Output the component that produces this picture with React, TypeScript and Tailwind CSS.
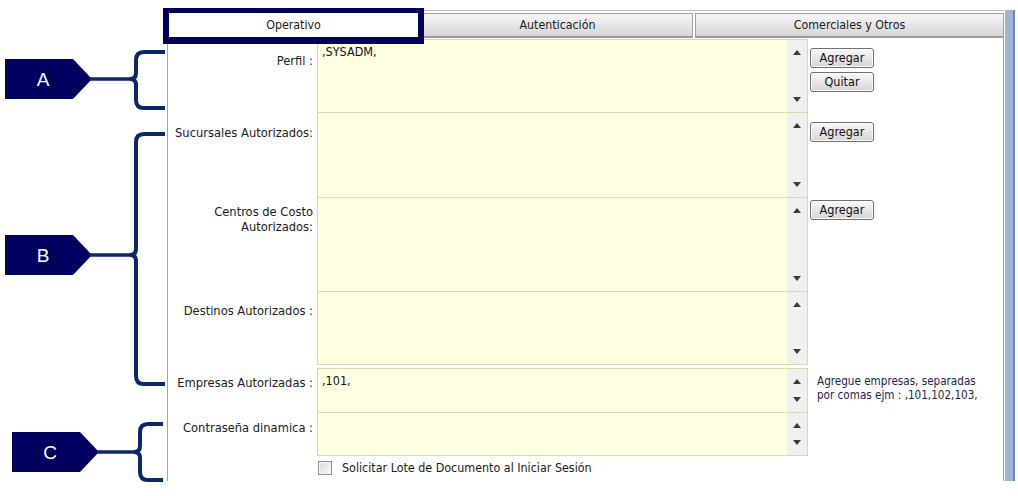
import type { ReactNode } from "react";

type Row = {
  label: string[];
  h: string;
  lp: string;
  sp?: string;
  value?: string;
  last?: boolean;
  side?: ReactNode;
};

// callout shapes for the left margin: tag + curly brace
const tag = (x0: number, xr: number, xt: number, ya: number, yb: number) =>
  `M${x0} ${ya} H${xr} L${xt} ${(ya + yb) / 2} L${xr} ${yb} H${x0} Z`;

const brace = (x: number, y0: number, ym: number, y1: number, xe: number) =>
  `M${xe} ${y0} H${x + 8} Q${x} ${y0} ${x} ${y0 + 8} V${ym - 6} Q${x} ${ym} ${x - 6} ${ym} Q${x} ${ym} ${x} ${ym + 6} V${y1 - 8} Q${x} ${y1} ${x + 8} ${y1} H${xe}`;

const callouts = [
  { letter: "A", x0: 5, xr: 73, xt: 92, ya: 59, yb: 99, bx: 136, y0: 52, y1: 108, xe: 165 },
  { letter: "B", x0: 5, xr: 73, xt: 92, ya: 235, yb: 275, bx: 136, y0: 134, y1: 384, xe: 165 },
  { letter: "C", x0: 12, xr: 80, xt: 99, ya: 432, yb: 472, bx: 140, y0: 424, y1: 480, xe: 163 },
];

function Callouts() {
  return (
    <svg width="167" height="496" className="flex-none">
      {callouts.map((c) => {
        const ym = (c.ya + c.yb) / 2;
        return (
          <g key={c.letter}>
            <path d={tag(c.x0, c.xr, c.xt, c.ya, c.yb)} fill="#00005f" />
            <path d={`M${c.xt - 2} ${ym} H${c.bx - 5}`} stroke="#0b2767" strokeWidth="3.5" fill="none" />
            <path d={brace(c.bx, c.y0, ym, c.y1, c.xe)} stroke="#0b2767" strokeWidth="4" fill="none" />
            <text
              x={(c.x0 + c.xr) / 2 + 4}
              y={ym + 7}
              textAnchor="middle"
              fill="#fff"
              fontSize="19"
              fontFamily="'Liberation Sans', Arial, sans-serif"
            >
              {c.letter}
            </text>
          </g>
        );
      })}
    </svg>
  );
}

function Arrow({ up }: { up?: boolean }) {
  return (
    <svg width="8" height="5" viewBox="0 0 8 5">
      <path d={up ? "M0 5 L4 0 L8 5 Z" : "M0 0 L4 5 L8 0 Z"} fill="#3a3a3a" />
    </svg>
  );
}

function Btn({ children }: { children: ReactNode }) {
  return (
    <button className="w-[64px] h-[20px] rounded-[3px] border border-[#707070] bg-linear-to-b from-[#f8f8f8] to-[#d6d6d6] text-[12.5px] leading-none text-[#111] shadow-[inset_0_0_0_1px_#fbfbfb]">
      {children}
    </button>
  );
}

function FieldRow({ row }: { row: Row }) {
  return (
    <div className={`flex ${row.h}`}>
      <div className={`w-[149px] pr-[4px] text-right text-[12.8px] leading-[15px] text-[#1b1b1b] ${row.lp}`}>
        {row.label.map((l) => (
          <div key={l}>{l}</div>
        ))}
      </div>
      <div
        className={`flex w-[491px] border-x border-t border-[#d8d8b2] ${row.last ? "border-b" : ""}`}
      >
        <div className="flex-1 bg-[#ffffe1] pl-[4px] pt-[5px] text-[12.5px] leading-[14px] text-[#111]">
          {row.value}
        </div>
        <div className="w-[20px] bg-[#f0f0f0] flex flex-col items-center justify-between py-[10px]">
          <Arrow up />
          <Arrow />
        </div>
      </div>
      <div className={`flex-1 pl-[2px] ${row.sp ?? "pt-[9px]"}`}>{row.side}</div>
    </div>
  );
}

const upper: Row[] = [
  {
    label: ["Perfil :"],
    h: "h-[73px]",
    lp: "pt-[14px]",
    value: ",SYSADM,",
    side: (
      <div className="flex flex-col gap-[4px]">
        <Btn>Agregar</Btn>
        <Btn>Quitar</Btn>
      </div>
    ),
  },
  { label: ["Sucursales Autorizados:"], h: "h-[85px]", lp: "pt-[13px]", sp: "pt-[7px]", side: <Btn>Agregar</Btn> },
  { label: ["Centros de Costo", "Autorizados:"], h: "h-[94px]", lp: "pt-[7px]", sp: "pt-0", side: <Btn>Agregar</Btn> },
  { label: ["Destinos Autorizados :"], h: "h-[74px]", lp: "pt-[12px]", last: true },
];

const lower: Row[] = [
  {
    label: ["Empresas Autorizadas :"],
    h: "h-[44px]",
    lp: "pt-[7px]",
    value: ",101,",
    sp: "pt-[6px]",
    side: (
      <p className="pl-[7px] text-[11.6px] leading-[14px] text-[#1e1e52]">
        Agregue empresas, separadas
        <br />
        por comas ejm : ,101,102,103,
      </p>
    ),
  },
  { label: ["Contraseña dinamica :"], h: "h-[44px]", lp: "pt-[8px]", last: true },
];

export default function App() {
  return (
    <div className="w-[1018px] h-[496px] bg-white flex overflow-hidden font-['DejaVu_Sans_Condensed','DejaVu_Sans',sans-serif] font-stretch-condensed">
      <Callouts />

      <div className="w-[837px] flex-none pt-[10px]">
        <div className="h-[3px] border-t border-[#bdbdbd]" />

        {/* tab strip */}
        <div className="flex h-[25px] text-[12.3px] text-[#1b1b1b]">
          <div className="relative w-[255px] bg-white flex items-center justify-center">
            <div className="absolute -left-[4px] -right-[2px] -top-[5px] -bottom-[6px] border-x-[6px] border-t-[5px] border-b-[7px] border-[#00005c] bg-white flex items-center justify-center z-10">
              Operativo
            </div>
          </div>
          <div className="w-[271px] border border-[#a2a2a2] border-b-2 border-b-[#9a9a9a] bg-linear-to-b from-[#f6f6f6] to-[#d6d6d6] flex items-center justify-center">
            Autenticación
          </div>
          <div className="ml-[2px] flex-1 border border-[#a2a2a2] border-b-2 border-b-[#9a9a9a] bg-linear-to-b from-[#f6f6f6] to-[#d6d6d6] flex items-center justify-center">
            Comerciales y Otros
          </div>
        </div>

        {/* Operativo tab body */}
        <div className="h-[443px] border-x border-[#a4a4a4] pt-[1px]">
          {upper.map((r) => (
            <FieldRow key={r.label[0]} row={r} />
          ))}
          <div className="h-[3px]" />
          {lower.map((r) => (
            <FieldRow key={r.label[0]} row={r} />
          ))}
          <label className="mt-[5px] ml-[150px] flex items-center gap-[10px] text-[12.4px] leading-[14px] text-[#1b1b1b]">
            <span className="w-[14px] h-[14px] border border-[#8e8f8f] bg-linear-to-br from-[#d9d9d9] to-[#fbfbfb] shadow-[inset_0_0_0_1px_#f4f4f4]" />
            Solicitar Lote de Documento al Iniciar Sesión
          </label>
        </div>
      </div>

      <div className="ml-[1px] mt-[10px] h-[471px] w-[10px] flex-none bg-[#a2b4d6] border-r-2 border-[#6b88bd]" />
    </div>
  );
}
